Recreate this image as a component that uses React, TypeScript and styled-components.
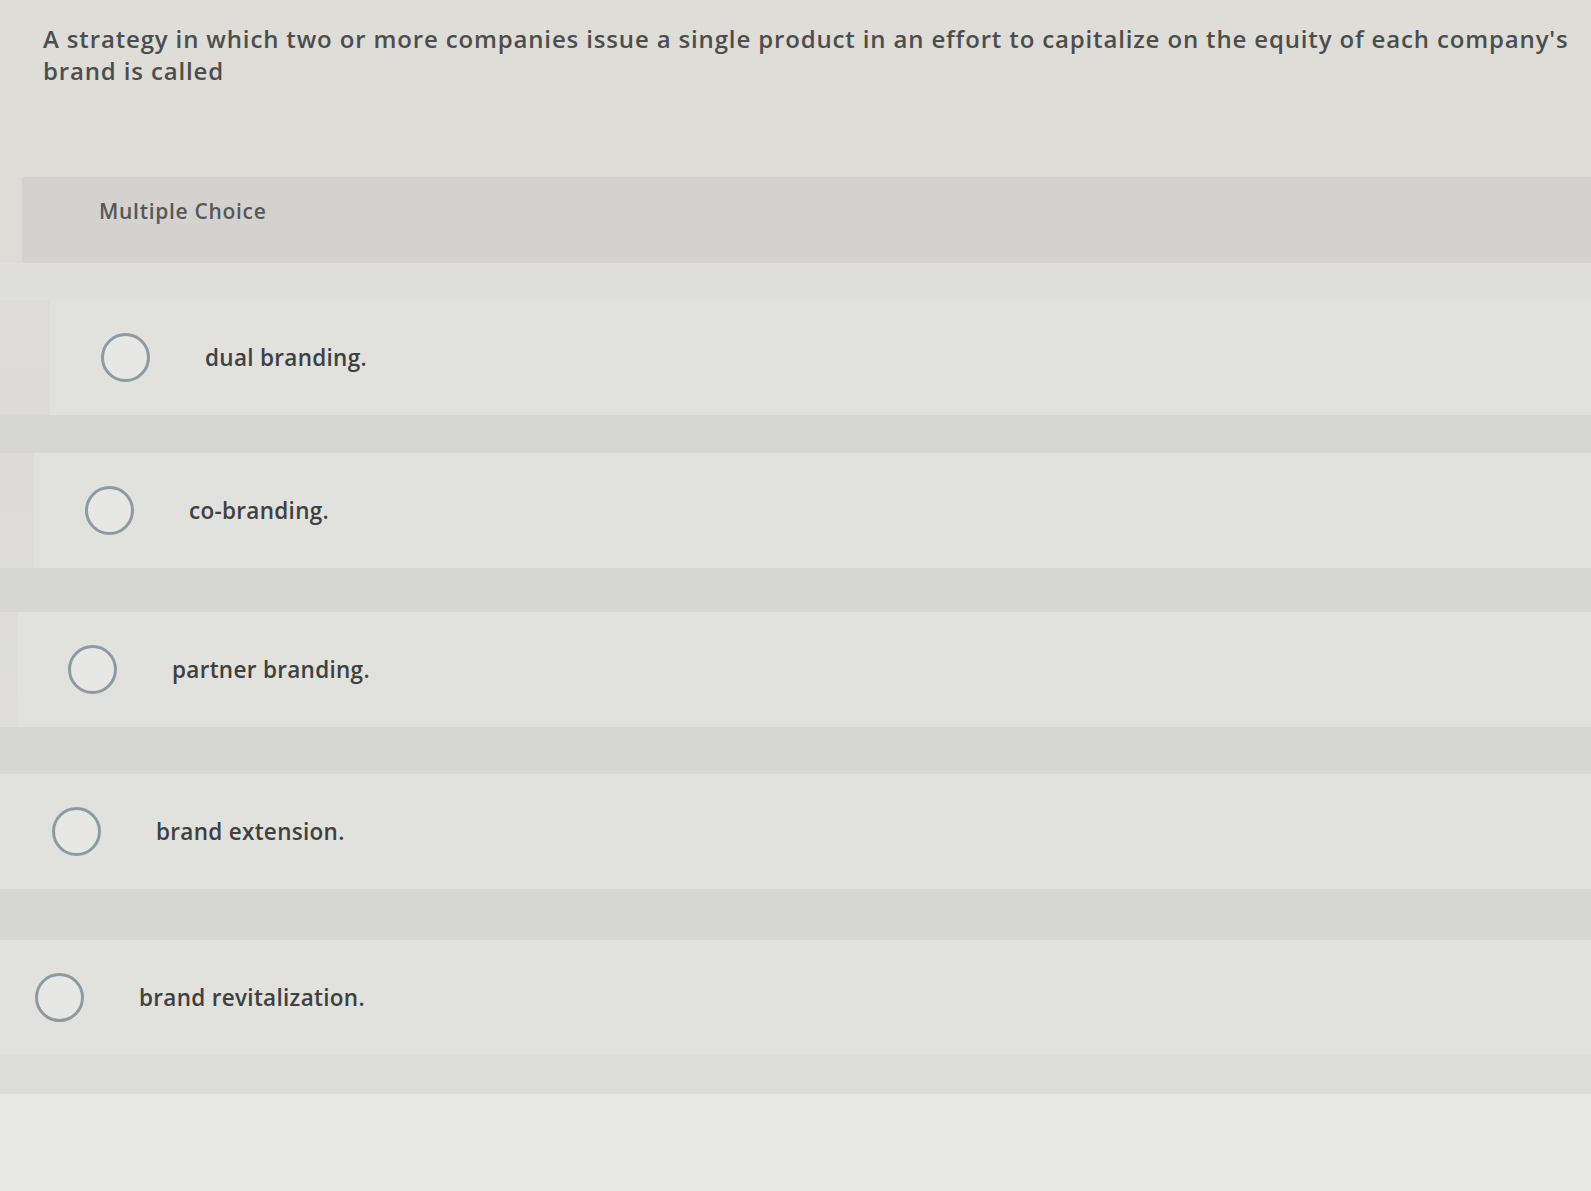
import React from "react";
import styled, { createGlobalStyle } from "styled-components";

const Global = createGlobalStyle`
  html, body { margin: 0; padding: 0; }
  body {
    background: #dddcd7;
    font-family: "Open Sans", Lato, "Liberation Sans", sans-serif;
    width: 1591px;
    height: 1191px;
    overflow: hidden;
  }
`;

const Page = styled.div`
  width: 1591px;
  height: 1191px;
  display: flex;
  flex-direction: column;
  background: linear-gradient(180deg, #dfddd7 0%, #dcdbd7 40%, #e3e3e0 100%);
`;

const Question = styled.p`
  margin: 0;
  padding: 23px 0 0 43px;
  height: 177px;
  box-sizing: border-box;
  font-size: 24px;
  line-height: 32px;
  font-weight: 600;
  color: #4d4d4d;
  letter-spacing: 0.85px;
  white-space: nowrap;
`;

const Panel = styled.section`
  display: flex;
  flex-direction: column;
`;

const Header = styled.div`
  margin-left: 22px;
  height: 86px;
  display: flex;
  align-items: center;
  padding-left: 77px;
  padding-bottom: 18px;
  box-sizing: border-box;
  background: #d3d2ce;
  font-size: 21px;
  font-weight: 600;
  color: #575757;
  letter-spacing: 0.7px;
`;

const Spacer = styled.div<{ $h: number; $tone: string }>`
  height: ${(p) => p.$h}px;
  background: ${(p) => p.$tone};
`;

const Option = styled.label<{ $shift: number }>`
  display: flex;
  align-items: center;
  height: 115px;
  margin-left: ${(p) => p.$shift}px;
  gap: 55px;
  background: #e1e1de;
  cursor: pointer;
`;

const Radio = styled.span`
  flex: none;
  width: 43px;
  height: 43px;
  border-radius: 50%;
  border: 3px solid #8c9ba1;
  background: #e7e7e5;
`;

const OptionText = styled.span`
  font-size: 22.5px;
  font-weight: 600;
  color: #404040;
  letter-spacing: 0.3px;
`;

const Bottom = styled.div`
  flex: 1;
  display: flex;
  flex-direction: column;
`;

const BottomStrip = styled.div`
  height: 38px;
  background: #dcdcd9;
`;

const BottomArea = styled.div`
  flex: 1;
  background: #e8e8e5;
  border-top: 1px solid #dededb;
`;

const options = [
  { text: "dual branding.", shift: 50, cx: 125 },
  { text: "co-branding.", shift: 34, cx: 109 },
  { text: "partner branding.", shift: 18, cx: 92 },
  { text: "brand extension.", shift: 0, cx: 76 },
  { text: "brand revitalization.", shift: 0, cx: 59 },
];

const gaps = [38, 44, 47, 51];

export default function App() {
  return (
    <>
      <Global />
      <Page>
        <Question>
          A strategy in which two or more companies issue a single product in an effort to capitalize on the equity of each company's
          <br />
          brand is called
        </Question>
        <Panel>
          <Header>Multiple Choice</Header>
          <Spacer $h={37} $tone="#dfdfdc" />
          {options.map((o, i) => (
            <React.Fragment key={o.text}>
              <Option $shift={o.shift} style={{ paddingLeft: o.cx - 24 - o.shift }}>
                <Radio />
                <OptionText>{o.text}</OptionText>
              </Option>
              {i < options.length - 1 && <Spacer $h={gaps[i]} $tone="#d6d6d3" />}
            </React.Fragment>
          ))}
        </Panel>
        <Bottom>
          <BottomStrip />
          <BottomArea />
        </Bottom>
      </Page>
    </>
  );
}
